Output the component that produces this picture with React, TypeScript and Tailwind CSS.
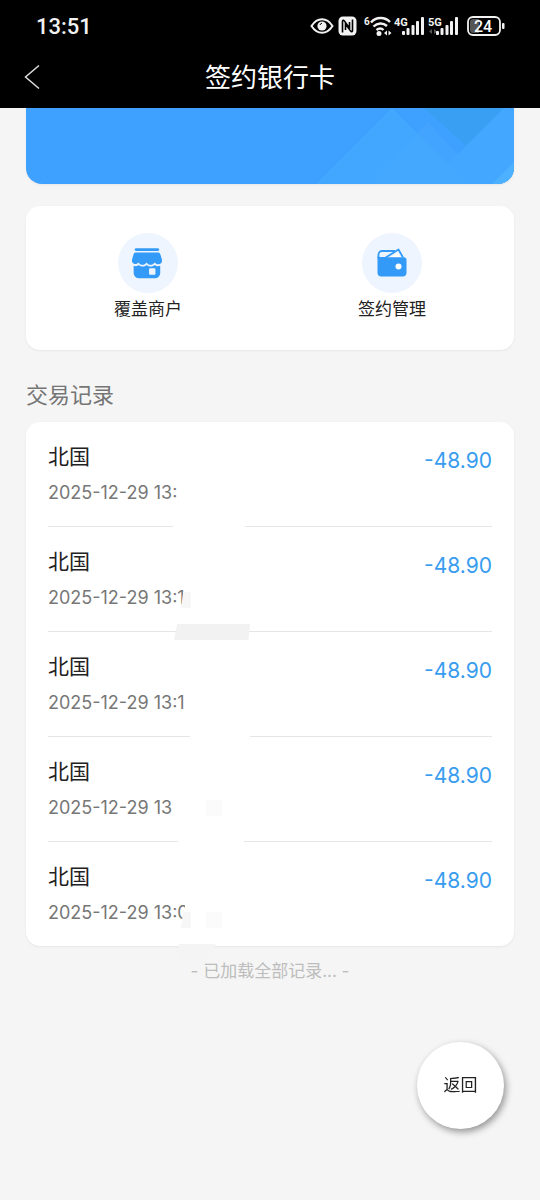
import clsx from "clsx";

type TransactionItem = {
  id: number;
  name: string;
  date: string;
  amount: string;
  // strips lying over the end of the date and over the divider
  masks: string[];
};

const transactions: TransactionItem[] = [
  {
    id: 1,
    name: "北国",
    date: "2025-12-29 13:",
    amount: "-48.90",
    masks: ["left-[125px] top-[98px] h-4 w-[72px] bg-white"],
  },
  {
    id: 2,
    name: "北国",
    date: "2025-12-29 13:1",
    amount: "-48.90",
    masks: [
      "left-[133px] top-[65px] h-4 w-[10px] bg-[#f7f7f7] [clip-path:polygon(22%_0,100%_0,100%_100%,0_100%)]",
      "left-[126px] top-[97px] h-4 w-[76px] bg-[#f2f2f2] [clip-path:polygon(4%_0,100%_0,98%_100%,0_100%)]",
    ],
  },
  {
    id: 3,
    name: "北国",
    date: "2025-12-29 13:1",
    amount: "-48.90",
    masks: ["left-[142px] top-[98px] h-4 w-[60px] bg-white"],
  },
  {
    id: 4,
    name: "北国",
    date: "2025-12-29 13",
    amount: "-48.90",
    masks: [
      "left-[158px] top-[63px] h-4 w-4 bg-[#fbfbfb]",
      "left-[130px] top-[98px] h-4 w-[66px] bg-white",
    ],
  },
  {
    id: 5,
    name: "北国",
    date: "2025-12-29 13:0",
    amount: "-48.90",
    masks: [
      "left-[137px] top-[58px] h-6 w-3 bg-white",
      "left-[133px] top-[70px] h-4 w-[10px] bg-[#f7f7f7] [clip-path:polygon(20%_0,100%_0,100%_100%,0_100%)]",
      "left-[158px] top-[70px] h-4 w-4 bg-[#fbfbfb]",
      "left-[131px] top-[102px] h-4 w-[37px] bg-[#f4f4f4] [clip-path:polygon(0_0,100%_0,66%_100%,0_100%)]",
    ],
  },
];

function SignalIcon({ label, weak }: { label: string; weak?: boolean }) {
  return (
    <svg width="32" height="22" viewBox="0 0 32 22" fill="#f2f2f2">
      <text
        x="0"
        y="11"
        fontSize="11"
        fontWeight="700"
        fontFamily="Roboto, sans-serif"
      >
        {label}
      </text>
      {weak && <path d="M4 14v5l-3-2.500zM6 14v5l3-2.500z" fill="#555" />}
      <rect x="8" y="16" width="3" height="4" rx="1" />
      <rect x="12.500" y="13" width="3" height="7" rx="1" />
      <rect x="17.500" y="10" width="3" height="10" rx="1" />
      <rect x="22" y="6" width="3" height="14" rx="1" />
      <rect x="27" y="2" width="3" height="18" rx="1" />
    </svg>
  );
}

function StatusBar() {
  return (
    <div className="flex h-[52px] items-center justify-between pr-[34px] pl-9 text-[#f2f2f2]">
      <span className="font-[Roboto,sans-serif] text-[22px] font-medium">
        13:51
      </span>
      <div className="flex items-center">
        <svg width="24" height="18" viewBox="0 0 24 18" fill="none">
          <path
            d="M1.500 9C4.500 4.300 8 2.200 12 2.200S19.500 4.300 22.500 9c-3 4.700-6.500 6.800-10.500 6.800S4.500 13.700 1.500 9z"
            stroke="currentColor"
            strokeWidth="2"
          />
          <circle cx="12" cy="9" r="4.600" fill="currentColor" />
          <path d="M10 8a2.500 2.500 0 0 1 2-1.800" stroke="#000" />
        </svg>
        <svg
          className="ml-1"
          width="20"
          height="20"
          viewBox="0 0 20 20"
          fill="none"
        >
          <rect x="0.500" y="0.500" width="18" height="19" rx="4.500" fill="currentColor" />
          <path
            d="M4.500 16.500V5.500c0-1.400 1-1.600 1.800-.6L11.500 12V6M14.500 3.500v11c0 1.400-1 1.600-1.800.6L7.500 8v6"
            stroke="#000"
            strokeWidth="1.600"
          />
        </svg>
        <svg
          className="ml-1.5"
          width="28"
          height="22"
          viewBox="0 0 28 22"
          fill="none"
          stroke="currentColor"
          strokeWidth="2.400"
        >
          <text
            x="0"
            y="10"
            fontSize="10"
            fontWeight="700"
            fontFamily="Roboto, sans-serif"
            fill="currentColor"
            stroke="none"
          >
            6
          </text>
          <path d="M7 7.500C12 1.500 21 1.500 26 7M9.500 11.500c4-4 9.500-4 13.500-.500M12.500 15c2.500-2 5-2 7 0" />
          <circle cx="15" cy="18.500" r="1.300" fill="currentColor" />
          <path
            d="M23 15.500v5l-3-2.500zM24.500 15.500v5l3-2.500z"
            fill="currentColor"
            stroke="none"
          />
        </svg>
        <div className="ml-0.5 flex gap-0.5">
          <SignalIcon label="4G" />
          <SignalIcon label="5G" weak />
        </div>
        <svg className="ml-1.5" width="40" height="22" viewBox="0 0 40 22">
          <rect
            x="2"
            y="2"
            width="32"
            height="18"
            rx="5"
            fill="#000"
            stroke="#f2f2f2"
            strokeWidth="1.800"
          />
          <path d="M13 4H7a3 3 0 0 0-3 3v8a3 3 0 0 0 3 3h6z" fill="#555" />
          <text
            x="17"
            y="17"
            textAnchor="middle"
            fontSize="16"
            fontWeight="500"
            fontFamily="Roboto, sans-serif"
            fill="#fff"
          >
            24
          </text>
          <rect x="36" y="8" width="2.500" height="6" rx="1" fill="#f2f2f2" />
        </svg>
      </div>
    </div>
  );
}

function MerchantIcon() {
  return (
    <svg width="34" height="34" viewBox="0 0 32 32" fill="#339af8">
      <rect x="3.500" y="2" width="23" height="2.600" rx="1.300" />
      <path d="M4.500 6h21c1.200 0 1.700.7 2.100 1.700l1.500 5.100c1 4.200-3.800 6-6.800 2.700-2.200 3-5.800 3-7.700 0-2 3-5.600 3-7.600 0C4 18.600 0 16.500 1 12.800l1.400-5.100c.4-1 .9-1.700 2.100-1.700z" />
      <path
        fillRule="evenodd"
        d="M2.500 18.500c2 .8 3.100.5 4.700-.7 2.500 2 5.300 2 7.500 0 2.500 2 5.300 2 7.600 0 1.600 1.200 3 1.500 5.200.7v6.800a5 5 0 0 1-5 5h-15a5 5 0 0 1-5-5zM18 21a1 1 0 0 0-1 1v4a1 1 0 0 0 1 1h4a1 1 0 0 0 1-1V22a1 1 0 0 0-1-1z"
      />
    </svg>
  );
}

function WalletIcon() {
  return (
    <svg width="32" height="32" viewBox="0 0 32 32" fill="none">
      <path
        d="M2.500 12V7.500A3.500 3.500 0 0 1 6 4h13M2.500 11H9L22.500 2.500l4.500 8"
        stroke="#339af8"
        strokeWidth="1.800"
        strokeLinejoin="round"
      />
      <path d="M13 11l9-5 2.500 5z" fill="#fff" />
      <path
        d="M1.500 8.500c0 1.300 1 1.800 2 1.800h24.500c1.500 0 2.500 1 2.500 2.500v12.700a4 4 0 0 1-4 4h-21a4 4 0 0 1-4-4z"
        fill="#339af8"
      />
      <circle cx="22.500" cy="19.500" r="3" fill="#fff" />
    </svg>
  );
}

const actions = [
  { label: "覆盖商户", icon: <MerchantIcon /> },
  { label: "签约管理", icon: <WalletIcon /> },
];

function Transaction({ item, isLast }: { item: TransactionItem; isLast: boolean }) {
  return (
    <li
      className={clsx(
        "relative flex justify-between py-[21px]",
        !isLast && "border-b border-[#e6e6e6]"
      )}
    >
      <div>
        <h3 className="text-[21px] leading-7 text-[#222]">{item.name}</h3>
        <p className="mt-2.5 text-[18px] leading-6 text-[#777]">{item.date}</p>
      </div>
      <span className="pt-1 text-[21px] leading-7 text-[#389cef]">
        {item.amount}
      </span>
      {item.masks.map((mask) => (
        <span key={mask} className={clsx("absolute", mask)} />
      ))}
    </li>
  );
}

export default function App() {
  return (
    <div className="min-h-screen bg-[#f5f5f5] font-[Inter,'Noto_Sans_CJK_SC',sans-serif] text-[#222]">
      <header className="bg-black pb-1.5">
        <StatusBar />
        <nav className="grid h-[50px] grid-cols-[64px_1fr_64px] items-center text-white">
          <button type="button" aria-label="返回上一页" className="pl-6">
            <svg width="16" height="26" viewBox="0 0 16 26" fill="none">
              <path d="M15 1.500L1.500 13 15 24.500" stroke="#ddd" strokeWidth="1.500" />
            </svg>
          </button>
          <h1 className="pt-0.5 text-center text-[26px] leading-9">签约银行卡</h1>
        </nav>
      </header>

      <main className="px-[26px]">
        <div className="h-[76px] overflow-hidden rounded-b-2xl bg-[#3fa1ff] shadow-sm shadow-black/5">
          <svg
            className="ml-auto"
            width="200"
            height="76"
            viewBox="0 0 200 76"
            fill="none"
          >
            <path d="M2 76L78 0l76 76z" fill="#42a7ff" />
            <path d="M58 76l56-62 56 62z" fill="#48a9ff" fillOpacity=".4" />
            <path d="M110 0h80l-38 38z" fill="#389ff3" />
            <path d="M190 0h10v54l-22 22h-64z" fill="#45a8ff" fillOpacity=".8" />
            <path d="M178 76l22-22v22z" fill="#4db1ff" />
          </svg>
        </div>

        <section className="mt-[22px] grid grid-cols-2 rounded-[14px] bg-white pt-[27px] pb-[29px] shadow-sm shadow-black/5">
          {actions.map((action) => (
            <button
              key={action.label}
              type="button"
              className="flex flex-col items-center"
            >
              <span className="flex size-15 items-center justify-center rounded-full bg-[#eef5fe]">
                {action.icon}
              </span>
              <span className="mt-1 text-[17px] leading-6">{action.label}</span>
            </button>
          ))}
        </section>

        <h2 className="mt-[29px] mb-[11px] text-[22px] leading-8 text-[#757575]">
          交易记录
        </h2>

        <ul className="rounded-[14px] bg-white px-[22px] shadow-sm shadow-black/5">
          {transactions.map((item, index) => (
            <Transaction
              key={item.id}
              item={item}
              isLast={index === transactions.length - 1}
            />
          ))}
        </ul>

        <p className="relative mt-[13px] text-center text-[17px] leading-6 text-[#bdbdbd]">
          - 已加载全部记录... -
        </p>
      </main>

      <button
        type="button"
        className="fixed right-9 bottom-[71px] size-[87px] rounded-full bg-white text-[17px] shadow-[2px_3px_7px_rgba(0,0,0,0.4)]"
      >
        返回
      </button>
    </div>
  );
}
